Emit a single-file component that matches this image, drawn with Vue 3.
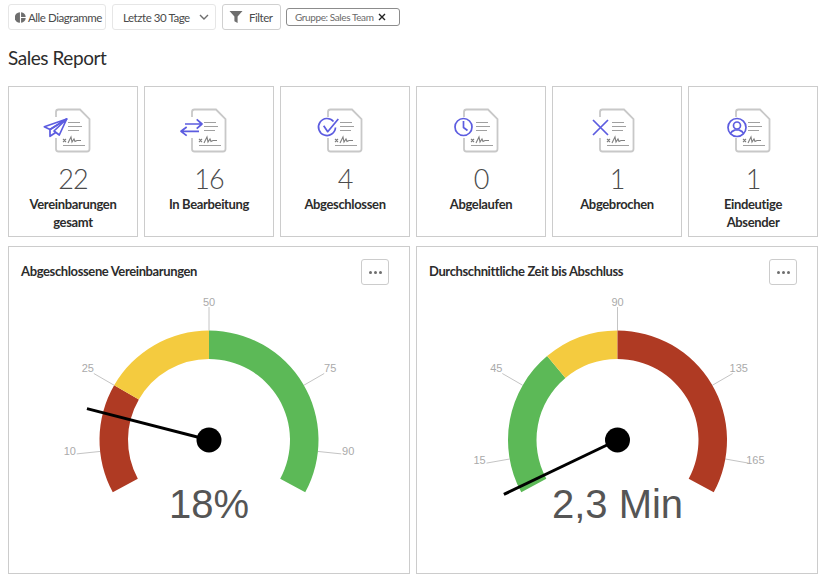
<template>
  <div class="page">
    <div class="toolbar">
      <button class="btn btn-all">
        <svg width="11" height="11" viewBox="0 0 12 12">
          <path d="M5.400 .3v11.400A5.700 5.700 0 0 1 5.400 .3z" fill="#6e6e6e" />
          <path d="M6.600 .3A5.700 5.700 0 0 1 11.700 5.400H6.600z" fill="#6e6e6e" />
          <path d="M6.600 6.600h5.100A5.700 5.700 0 0 1 6.600 11.700z" fill="#6e6e6e" />
        </svg>
        Alle Diagramme
      </button>
      <button class="btn btn-range">
        Letzte 30 Tage
        <svg width="10" height="6" viewBox="0 0 10 6">
          <path d="M1 1l4 4 4-4" fill="none" stroke="#6e6e6e" stroke-width="1.400" />
        </svg>
      </button>
      <button class="btn btn-filter">
        <svg width="14" height="14" viewBox="0 0 14 14">
          <path d="M.5 1h13L8.600 6.600V13L5.400 11.200V6.600z" fill="#6e6e6e" />
        </svg>
        Filter
      </button>
      <div class="tag">
        Gruppe: Sales Team
        <svg width="8" height="8" viewBox="0 0 8 8">
          <path d="M1 1l6 6M7 1L1 7" stroke="#222" stroke-width="1.400" />
        </svg>
      </div>
    </div>

    <h1 class="title">Sales Report</h1>

    <div class="cards">
      <div v-for="card in cards" :key="card.label" class="card">
        <svg class="doc" width="60" height="50" viewBox="0 0 60 50">
          <path
            d="M15.500 3.500H37L46.500 13V43a2.500 2.500 0 0 1-2.500 2.500H15.500A2.500 2.500 0 0 1 13 43V6a2.500 2.500 0 0 1 2.500-2.500z"
            fill="#fff"
            stroke="#c8c8c8"
            stroke-width="1.800"
          />
          <path d="M25 16.500h12M25 20.500h14M25 24.500h11M20 39.500h22" stroke="#a0a0a0" stroke-width="1" fill="none" />
          <path
            d="M20 33l3 3M23 33l-3 3M25 37l3-6 1 5 2-3 1 2.500 2-1h4"
            stroke="#808080"
            stroke-width="1.100"
            fill="none"
          />
          <rect x="0" y="11" width="14.500" height="21" fill="#fff" />
          <g fill="none" stroke="#5c5ce0" stroke-width="1.700" stroke-linejoin="round">
            <template v-if="card.icon === 'send'">
              <path d="M23.700 13L1.300 20.700 7 23.500z" />
              <path d="M23.700 13L7 23.500v6.800l6-4" />
              <path d="M23.700 13L11 25l5.300 4z" />
            </template>
            <template v-else-if="card.icon === 'swap'">
              <path d="M6 18h17M17.700 13.300L23 18l-5.300 4.700" />
              <path d="M20 25.300H2M7.700 21L2 25.300l5.700 4.400" />
            </template>
            <template v-else-if="card.icon === 'check'">
              <path d="M18.500 15.500A8.500 8.500 0 1 0 20.500 21.500" />
              <path d="M8.700 19.700l4 6L23.300 13" />
            </template>
            <template v-else-if="card.icon === 'clock'">
              <circle cx="12.500" cy="21" r="8.500" />
              <path d="M12.500 15v6.500l4 3" />
            </template>
            <template v-else-if="card.icon === 'cross'">
              <path d="M6 14l15 15M21 14L6 29" />
            </template>
            <template v-else>
              <circle cx="14" cy="21.500" r="9" />
              <circle cx="14" cy="19.500" r="3.500" />
              <path d="M7.500 27.500c1-2.500 3-3 4.500-3.500h4c1.500.5 3.500 1 4.500 3.500" />
            </template>
          </g>
        </svg>
        <div class="count">{{ card.count }}</div>
        <div class="label">{{ card.label }}</div>
      </div>
    </div>

    <div class="panels">
      <div v-for="g in gauges" :key="g.title" class="panel">
        <div class="panel-head">
          <span class="panel-title">{{ g.title }}</span>
          <button class="more"><i></i><i></i><i></i></button>
        </div>
        <svg class="gauge" viewBox="0 0 400 287">
          <g v-for="t in g.ticks" :key="t.text">
            <line :x1="t.x1" :y1="t.y1" :x2="t.x2" :y2="t.y2" stroke="#c4c4c4" stroke-width="1" />
            <text :x="t.tx" :y="t.ty" class="tick">{{ t.text }}</text>
          </g>
          <path v-for="s in g.segments" :key="s.color" :d="s.d" :fill="s.color" />
          <line :x1="g.cx" :y1="cy" :x2="g.nx" :y2="g.ny" stroke="#000" stroke-width="3" />
          <circle :cx="g.cx" :cy="cy" r="12.500" fill="#000" />
          <text :x="g.cx" y="233" class="value">{{ g.value }}</text>
        </svg>
      </div>
    </div>
  </div>
</template>

<script setup>
const RED = '#af3a23'
const YELLOW = '#f4cb3f'
const GREEN = '#5cb957'

const cy = 155
const OUTER = 109.5
const INNER = 81
const SWEEP_END = 118.5

const cards = [
  { icon: 'send', count: 22, label: 'Vereinbarungen gesamt' },
  { icon: 'swap', count: 16, label: 'In Bearbeitung' },
  { icon: 'check', count: 4, label: 'Abgeschlossen' },
  { icon: 'clock', count: 0, label: 'Abgelaufen' },
  { icon: 'cross', count: 1, label: 'Abgebrochen' },
  { icon: 'user', count: 1, label: 'Eindeutige Absender' }
]

// Winkel in Grad, 0 = oben, im Uhrzeigersinn
const polar = (cx, r, deg) => {
  const a = (deg * Math.PI) / 180
  return [+(cx + r * Math.sin(a)).toFixed(2), +(cy - r * Math.cos(a)).toFixed(2)]
}

const arc = (cx, from, to) => {
  const [ax, ay] = polar(cx, OUTER, from)
  const [bx, by] = polar(cx, OUTER, to)
  const [ix, iy] = polar(cx, INNER, to)
  const [jx, jy] = polar(cx, INNER, from)
  const large = to - from > 180 ? 1 : 0
  return `M${ax} ${ay}A${OUTER} ${OUTER} 0 ${large} 1 ${bx} ${by}L${ix} ${iy}A${INNER} ${INNER} 0 ${large} 0 ${jx} ${jy}Z`
}

const buildGauge = ({ title, value, cx, needle, max, ticks, stops }) => {
  const angle = (v) => (v / max) * 240 - 120
  const clamp = (deg) => Math.max(-SWEEP_END, Math.min(SWEEP_END, deg))
  const [nx, ny] = polar(cx, 126, angle(needle))
  return {
    title,
    value,
    cx,
    nx,
    ny,
    segments: stops.map((s) => ({ color: s.color, d: arc(cx, clamp(angle(s.from)), clamp(angle(s.to))) })),
    ticks: ticks.map((text) => {
      const deg = angle(text)
      const [x1, y1] = polar(cx, OUTER, deg)
      const [x2, y2] = polar(cx, 133, deg)
      const [tx, ty] = polar(cx, 140, deg)
      // Beschriftung sitzt oben etwas tiefer, seitlich etwas höher
      return { text, x1, y1, x2, y2, tx, ty: ty + 6 - 0.06 * Math.abs(deg) }
    })
  }
}

const gauges = [
  buildGauge({
    title: 'Abgeschlossene Vereinbarungen',
    value: '18%',
    cx: 200,
    needle: 18.5,
    max: 100,
    ticks: [10, 25, 50, 75, 90],
    stops: [
      { color: RED, from: 0, to: 25 },
      { color: YELLOW, from: 25, to: 50 },
      { color: GREEN, from: 50, to: 100 }
    ]
  }),
  buildGauge({
    title: 'Durchschnittliche Zeit bis Abschluss',
    value: '2,3 Min',
    cx: 200.5,
    needle: 3.3,
    max: 180,
    ticks: [15, 45, 90, 135, 165],
    stops: [
      { color: GREEN, from: 0, to: 60 },
      { color: YELLOW, from: 60, to: 90 },
      { color: RED, from: 90, to: 180 }
    ]
  })
]
</script>

<style scoped>
.page {
  width: 830px;
  height: 578px;
  box-sizing: border-box;
  padding: 4px 12px 0 8px;
  overflow: hidden;
  font-family: Lato, "Noto Sans", sans-serif;
  color: #2c2c2c;
  background: #fff;
}

.toolbar {
  display: flex;
  align-items: center;
  height: 26px;
  gap: 6px;
}

.btn {
  display: flex;
  align-items: center;
  height: 26px;
  box-sizing: border-box;
  padding: 0;
  font: inherit;
  font-size: 11.500px;
  letter-spacing: -0.45px;
  white-space: nowrap;
  color: #4b4b4b;
  background: #fff;
  border: 1px solid #e6e6e6;
  border-radius: 3px;
}

.btn svg {
  flex: none;
}

.btn-all {
  width: 98px;
  padding-left: 6px;
  gap: 2px;
}

.btn-range {
  width: 104px;
  padding-left: 10px;
  gap: 9px;
}

.btn-filter {
  width: 59px;
  padding-left: 6px;
  gap: 6px;
  border-color: #d0d0d0;
}

.tag {
  display: flex;
  align-items: center;
  gap: 4px;
  width: 114px;
  height: 18px;
  box-sizing: border-box;
  margin-left: -1px;
  padding-left: 8px;
  font-size: 10px;
  letter-spacing: -0.4px;
  white-space: nowrap;
  color: #6a6a6a;
  border: 1px solid #8c8c8c;
  border-radius: 3px;
}

.title {
  margin: 15px 0 15px;
  font-size: 19px;
  line-height: 26px;
  letter-spacing: -0.45px;
  font-weight: 400;
  color: #2c2c2c;
}

.cards {
  display: grid;
  grid-template-columns: repeat(6, 1fr);
  gap: 6px;
}

.card {
  display: flex;
  flex-direction: column;
  align-items: center;
  height: 151px;
  box-sizing: border-box;
  padding: 19px 6px 0;
  text-align: center;
  border: 1px solid #ccc;
}

.doc {
  flex: none;
}

.count {
  margin-top: 6px;
  font-size: 27px;
  line-height: 34px;
  letter-spacing: -1px;
  font-weight: 300;
  color: #4b4b4b;
}

.label {
  max-width: 100px;
  margin-top: -1px;
  font-size: 13px;
  line-height: 18px;
  letter-spacing: -0.35px;
  font-weight: 700;
  color: #2c2c2c;
}

.panels {
  display: grid;
  grid-template-columns: 1fr 1fr;
  gap: 6px;
  margin-top: 9px;
}

.panel {
  height: 328px;
  box-sizing: border-box;
  border: 1px solid #ccc;
}

.panel-head {
  display: flex;
  justify-content: space-between;
  align-items: center;
  height: 26px;
  padding: 12px 20px 0 12px;
}

.panel-title {
  margin-bottom: 2px;
  font-size: 13px;
  letter-spacing: -0.38px;
  font-weight: 700;
  color: #2c2c2c;
}

.more {
  display: flex;
  justify-content: center;
  align-items: center;
  gap: 2px;
  width: 28px;
  height: 26px;
  box-sizing: border-box;
  padding: 0;
  background: #fff;
  border: 1px solid #ccc;
  border-radius: 3px;
}

.more i {
  width: 3px;
  height: 3px;
  border-radius: 50%;
  background: #6e6e6e;
}

.gauge {
  display: block;
  width: 400px;
  height: 287px;
  opacity: 0.999;
}

.tick {
  font-family: "Liberation Sans", Arial, sans-serif;
  font-size: 11px;
  fill: #aaa;
  text-anchor: middle;
}

.value {
  font-family: "Liberation Sans", Arial, sans-serif;
  font-size: 40px;
  fill: #555;
  text-anchor: middle;
}
</style>

<style>
html,
body {
  margin: 0;
  background: #fff;
}
</style>
